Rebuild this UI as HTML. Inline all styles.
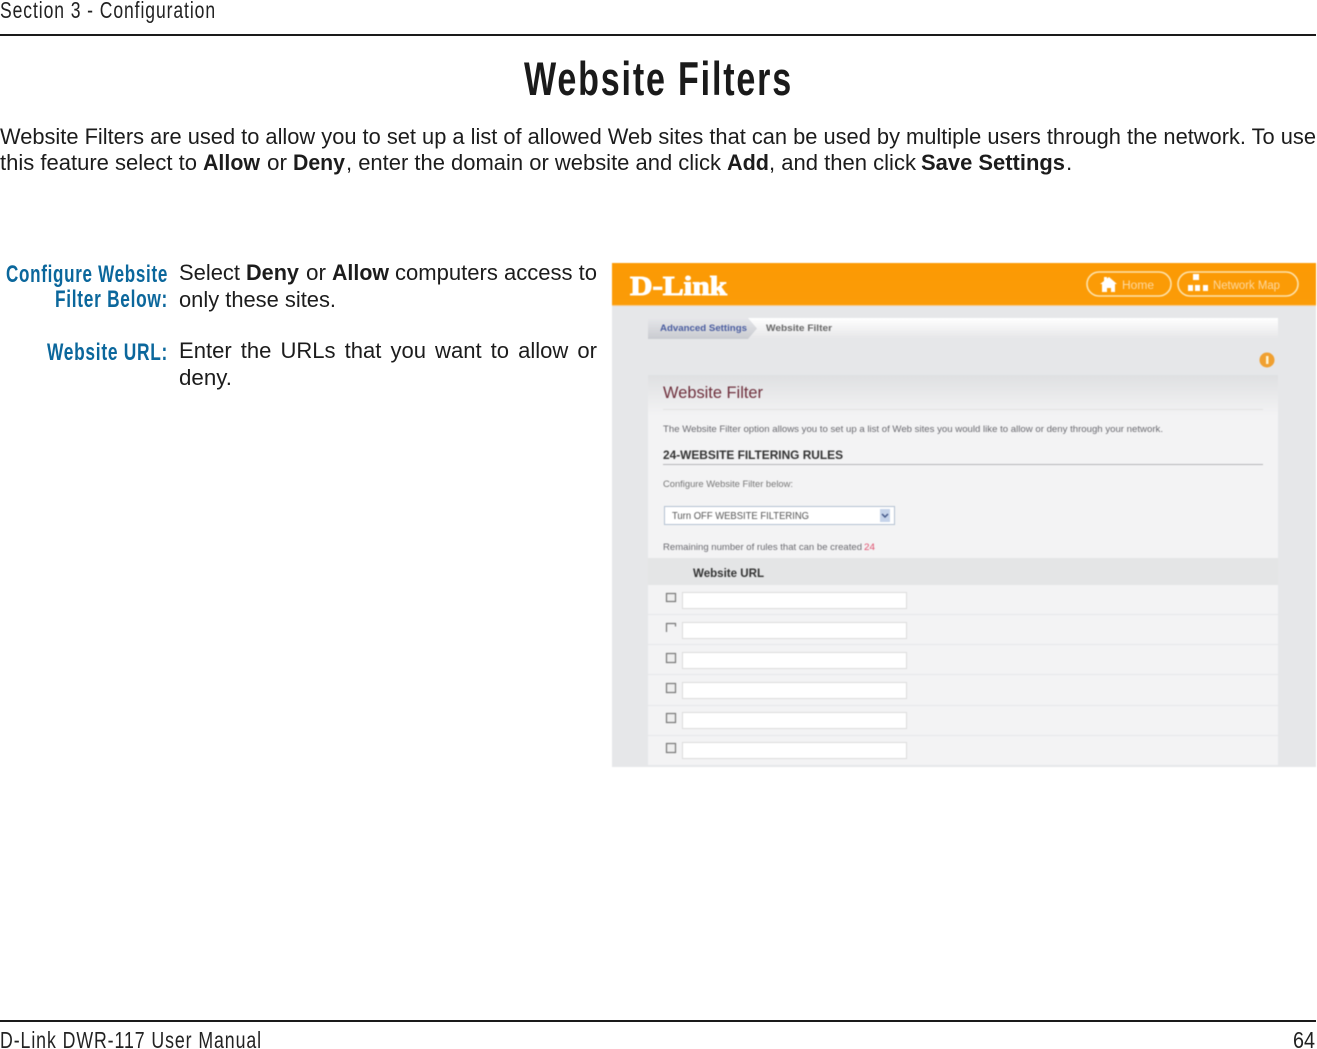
<!DOCTYPE html>
<html lang="en"><head><meta charset="utf-8"><title>Website Filters</title>
<style>
html,body{margin:0;padding:0;background:#fff;width:1317px;height:1049px;overflow:hidden}
svg{display:block;font-family:"Liberation Sans",sans-serif}
.b{font-weight:bold}
.t{fill:#1c1c1c;font-size:22.5px}
.h{fill:#0b679c;font-size:24px;font-weight:bold;letter-spacing:1px}
.c{letter-spacing:1.2px}
</style></head><body>
<svg width="1317" height="1049" viewBox="0 0 1317 1049" xmlns="http://www.w3.org/2000/svg">
<defs>
<linearGradient id="or" x1="0" y1="0" x2="0" y2="1"><stop offset="0" stop-color="#fc9a04"/><stop offset="1" stop-color="#fb9c08"/></linearGradient>
<linearGradient id="bc" x1="0" y1="0" x2="0" y2="1"><stop offset="0" stop-color="#ffffff"/><stop offset="1" stop-color="#e6e6e8"/></linearGradient>
<linearGradient id="tab" x1="0" y1="0" x2="0" y2="1"><stop offset="0" stop-color="#e6e7ea"/><stop offset="1" stop-color="#c9cbd0"/></linearGradient>
<linearGradient id="pan" x1="0" y1="0" x2="0" y2="1"><stop offset="0" stop-color="#dfe0e2"/><stop offset="1" stop-color="#f3f3f4"/></linearGradient>
</defs>
<rect width="1317" height="1049" fill="#fff"/>

<text x="0" y="18" font-size="23" fill="#222" class="c" textLength="216" lengthAdjust="spacingAndGlyphs">Section 3 - Configuration</text>
<rect x="0" y="34" width="1316" height="2" fill="#1a1a1a"/>
<text x="524" y="95" font-size="47" class="b" fill="#1a1a1a" style="letter-spacing:2.5px" textLength="269" lengthAdjust="spacingAndGlyphs">Website Filters</text>

<text x="0" y="144" class="t" textLength="1316" lengthAdjust="spacingAndGlyphs">Website Filters are used to allow you to set up a list of allowed Web sites that can be used by multiple users through the network. To use</text>
<text x="0" y="170" class="t" textLength="197" lengthAdjust="spacingAndGlyphs">this feature select to</text>
<text x="203" y="170" class="t b" textLength="57" lengthAdjust="spacingAndGlyphs">Allow</text>
<text x="267" y="170" class="t" textLength="20" lengthAdjust="spacingAndGlyphs">or</text>
<text x="293" y="170" class="t b" textLength="52" lengthAdjust="spacingAndGlyphs">Deny</text>
<text x="346" y="170" class="t" textLength="375" lengthAdjust="spacingAndGlyphs">, enter the domain or website and click</text>
<text x="727" y="170" class="t b" textLength="42" lengthAdjust="spacingAndGlyphs">Add</text>
<text x="769" y="170" class="t" textLength="147" lengthAdjust="spacingAndGlyphs">, and then click</text>
<text x="921" y="170" class="t b" textLength="144" lengthAdjust="spacingAndGlyphs">Save Settings</text>
<text x="1066" y="170" class="t">.</text>

<text x="6" y="282" class="h" textLength="162" lengthAdjust="spacingAndGlyphs">Configure Website</text>
<text x="55" y="307" class="h" textLength="113" lengthAdjust="spacingAndGlyphs">Filter Below:</text>
<text x="47" y="360" class="h" textLength="121" lengthAdjust="spacingAndGlyphs">Website URL:</text>

<text x="179" y="280" class="t" textLength="61" lengthAdjust="spacingAndGlyphs">Select</text>
<text x="246" y="280" class="t b" textLength="53" lengthAdjust="spacingAndGlyphs">Deny</text>
<text x="306" y="280" class="t" textLength="20" lengthAdjust="spacingAndGlyphs">or</text>
<text x="332" y="280" class="t b" textLength="57" lengthAdjust="spacingAndGlyphs">Allow</text>
<text x="395" y="280" class="t" textLength="202" lengthAdjust="spacingAndGlyphs">computers access to</text>
<text x="179" y="307" class="t" textLength="157" lengthAdjust="spacingAndGlyphs">only these sites.</text>
<text x="179" y="358" class="t" style="word-spacing:3px" textLength="418" lengthAdjust="spacingAndGlyphs">Enter the URLs that you want to allow or</text>
<text x="179" y="385" class="t" textLength="53" lengthAdjust="spacingAndGlyphs">deny.</text>

<g style="filter:blur(.5px)">
<rect x="612" y="263" width="704" height="504" fill="#e6e7e9"/>
<rect x="612" y="263" width="704" height="42" fill="url(#or)"/>
<rect x="612" y="305" width="704" height="1" fill="#f6c98a"/>
<text x="630" y="295" font-family="Liberation Serif" font-weight="bold" font-size="27" fill="#fff" stroke="#fff" stroke-width="1" textLength="97" lengthAdjust="spacingAndGlyphs">D-Link</text>
<rect x="1087" y="272" width="84" height="24" rx="12" fill="none" stroke="#fde3ad" stroke-width="1.6"/>
<rect x="1178" y="272" width="120" height="24" rx="12" fill="none" stroke="#fde3ad" stroke-width="1.6"/>
<path d="M1100 284l4-3v-4h3v1.500l2-1.500 8 7h-2v8h-4v-4h-4v4h-5v-8z" fill="#fff"/>
<text x="1122" y="289" font-size="11.500" fill="#fdd9a0" textLength="32" lengthAdjust="spacingAndGlyphs">Home</text>
<g fill="#fff"><rect x="1193" y="274" width="6" height="6"/><rect x="1188" y="285" width="5" height="6"/><rect x="1195" y="285" width="5" height="6"/><rect x="1203" y="285" width="5" height="6"/></g>
<text x="1213" y="289" font-size="11.500" fill="#fdd9a0" textLength="67" lengthAdjust="spacingAndGlyphs">Network Map</text>

<rect x="648" y="318" width="630" height="21" fill="url(#bc)"/>
<path d="M648 318h100l9 10.500-9 10.500h-100z" fill="url(#tab)"/>
<text x="660" y="331" font-size="9.500" font-weight="bold" fill="#4a5da0" textLength="87" lengthAdjust="spacingAndGlyphs">Advanced Settings</text>
<text x="766" y="331" font-size="9.500" font-weight="bold" fill="#666" textLength="66" lengthAdjust="spacingAndGlyphs">Website Filter</text>
<circle cx="1267" cy="360" r="7.500" fill="#f0a030"/>
<rect x="1266" y="356" width="2.500" height="8" fill="#fff3d0"/>

<rect x="648" y="375" width="630" height="40" fill="url(#pan)"/>
<rect x="648" y="415" width="630" height="143" fill="#f3f3f4"/>
<text x="663" y="398" font-size="16.500" fill="#6e2f3c" textLength="100" lengthAdjust="spacingAndGlyphs">Website Filter</text>
<rect x="663" y="409" width="600" height="1" fill="#e2e2e2"/>
<text x="663" y="432" font-size="9.500" fill="#6a6a70" textLength="500" lengthAdjust="spacingAndGlyphs">The Website Filter option allows you to set up a list of Web sites you would like to allow or deny through your network.</text>
<text x="663" y="459" font-size="12" font-weight="bold" fill="#333" textLength="180" lengthAdjust="spacingAndGlyphs">24-WEBSITE FILTERING RULES</text>
<rect x="663" y="464" width="600" height="1" fill="#b5b5b8"/>
<text x="663" y="487" font-size="9.500" fill="#777" textLength="130" lengthAdjust="spacingAndGlyphs">Configure Website Filter below:</text>
<rect x="664.500" y="506.500" width="230" height="18" fill="#fff" stroke="#b4c2d2"/>
<text x="672" y="519" font-size="10" fill="#555" textLength="137" lengthAdjust="spacingAndGlyphs">Turn OFF WEBSITE FILTERING</text>
<rect x="880" y="509" width="10" height="13" fill="#c5d3ea"/>
<path d="M882 514l3 3 3-3" fill="none" stroke="#44588a" stroke-width="1.500"/>
<text x="663" y="550" font-size="9.500" fill="#6a6a70" textLength="199" lengthAdjust="spacingAndGlyphs">Remaining number of rules that can be created</text>
<text x="864" y="550" font-size="9.500" fill="#e0506e" textLength="11" lengthAdjust="spacingAndGlyphs">24</text>

<rect x="648" y="558" width="630" height="27" fill="#e4e5e6"/>
<text x="693" y="577" font-size="12" font-weight="bold" fill="#333" textLength="71" lengthAdjust="spacingAndGlyphs">Website URL</text>

<g fill="#f3f3f4">
<rect x="648" y="585" width="630" height="29"/>
<rect x="648" y="615" width="630" height="29"/>
<rect x="648" y="645" width="630" height="29"/>
<rect x="648" y="675" width="630" height="30"/>
<rect x="648" y="706" width="630" height="29"/>
<rect x="648" y="736" width="630" height="29"/>
</g>
<g fill="#fff" stroke="#dcdcdc">
<rect x="682.500" y="592.500" width="224" height="16"/>
<rect x="682.500" y="622.500" width="224" height="16"/>
<rect x="682.500" y="652.500" width="224" height="16"/>
<rect x="682.500" y="682.500" width="224" height="16"/>
<rect x="682.500" y="712.500" width="224" height="16"/>
<rect x="682.500" y="742.500" width="224" height="16"/>
</g>
<g fill="#eee" stroke="#777" stroke-width="1.200">
<rect x="666.500" y="593.500" width="9" height="8"/>
<path d="M666.500 632v-8.500h9v3" fill="none"/>
<rect x="666.500" y="653.500" width="9" height="9"/>
<rect x="666.500" y="683.500" width="9" height="9"/>
<rect x="666.500" y="713.500" width="9" height="9"/>
<rect x="666.500" y="743.500" width="9" height="9"/>
</g>
</g>

<rect x="0" y="1020" width="1316" height="2" fill="#1a1a1a"/>
<text x="0" y="1048" font-size="23" fill="#222" class="c" textLength="262" lengthAdjust="spacingAndGlyphs">D-Link DWR-117 User Manual</text>
<text x="1293" y="1048" font-size="23" fill="#222" textLength="22" lengthAdjust="spacingAndGlyphs">64</text>
</svg>
</body></html>
